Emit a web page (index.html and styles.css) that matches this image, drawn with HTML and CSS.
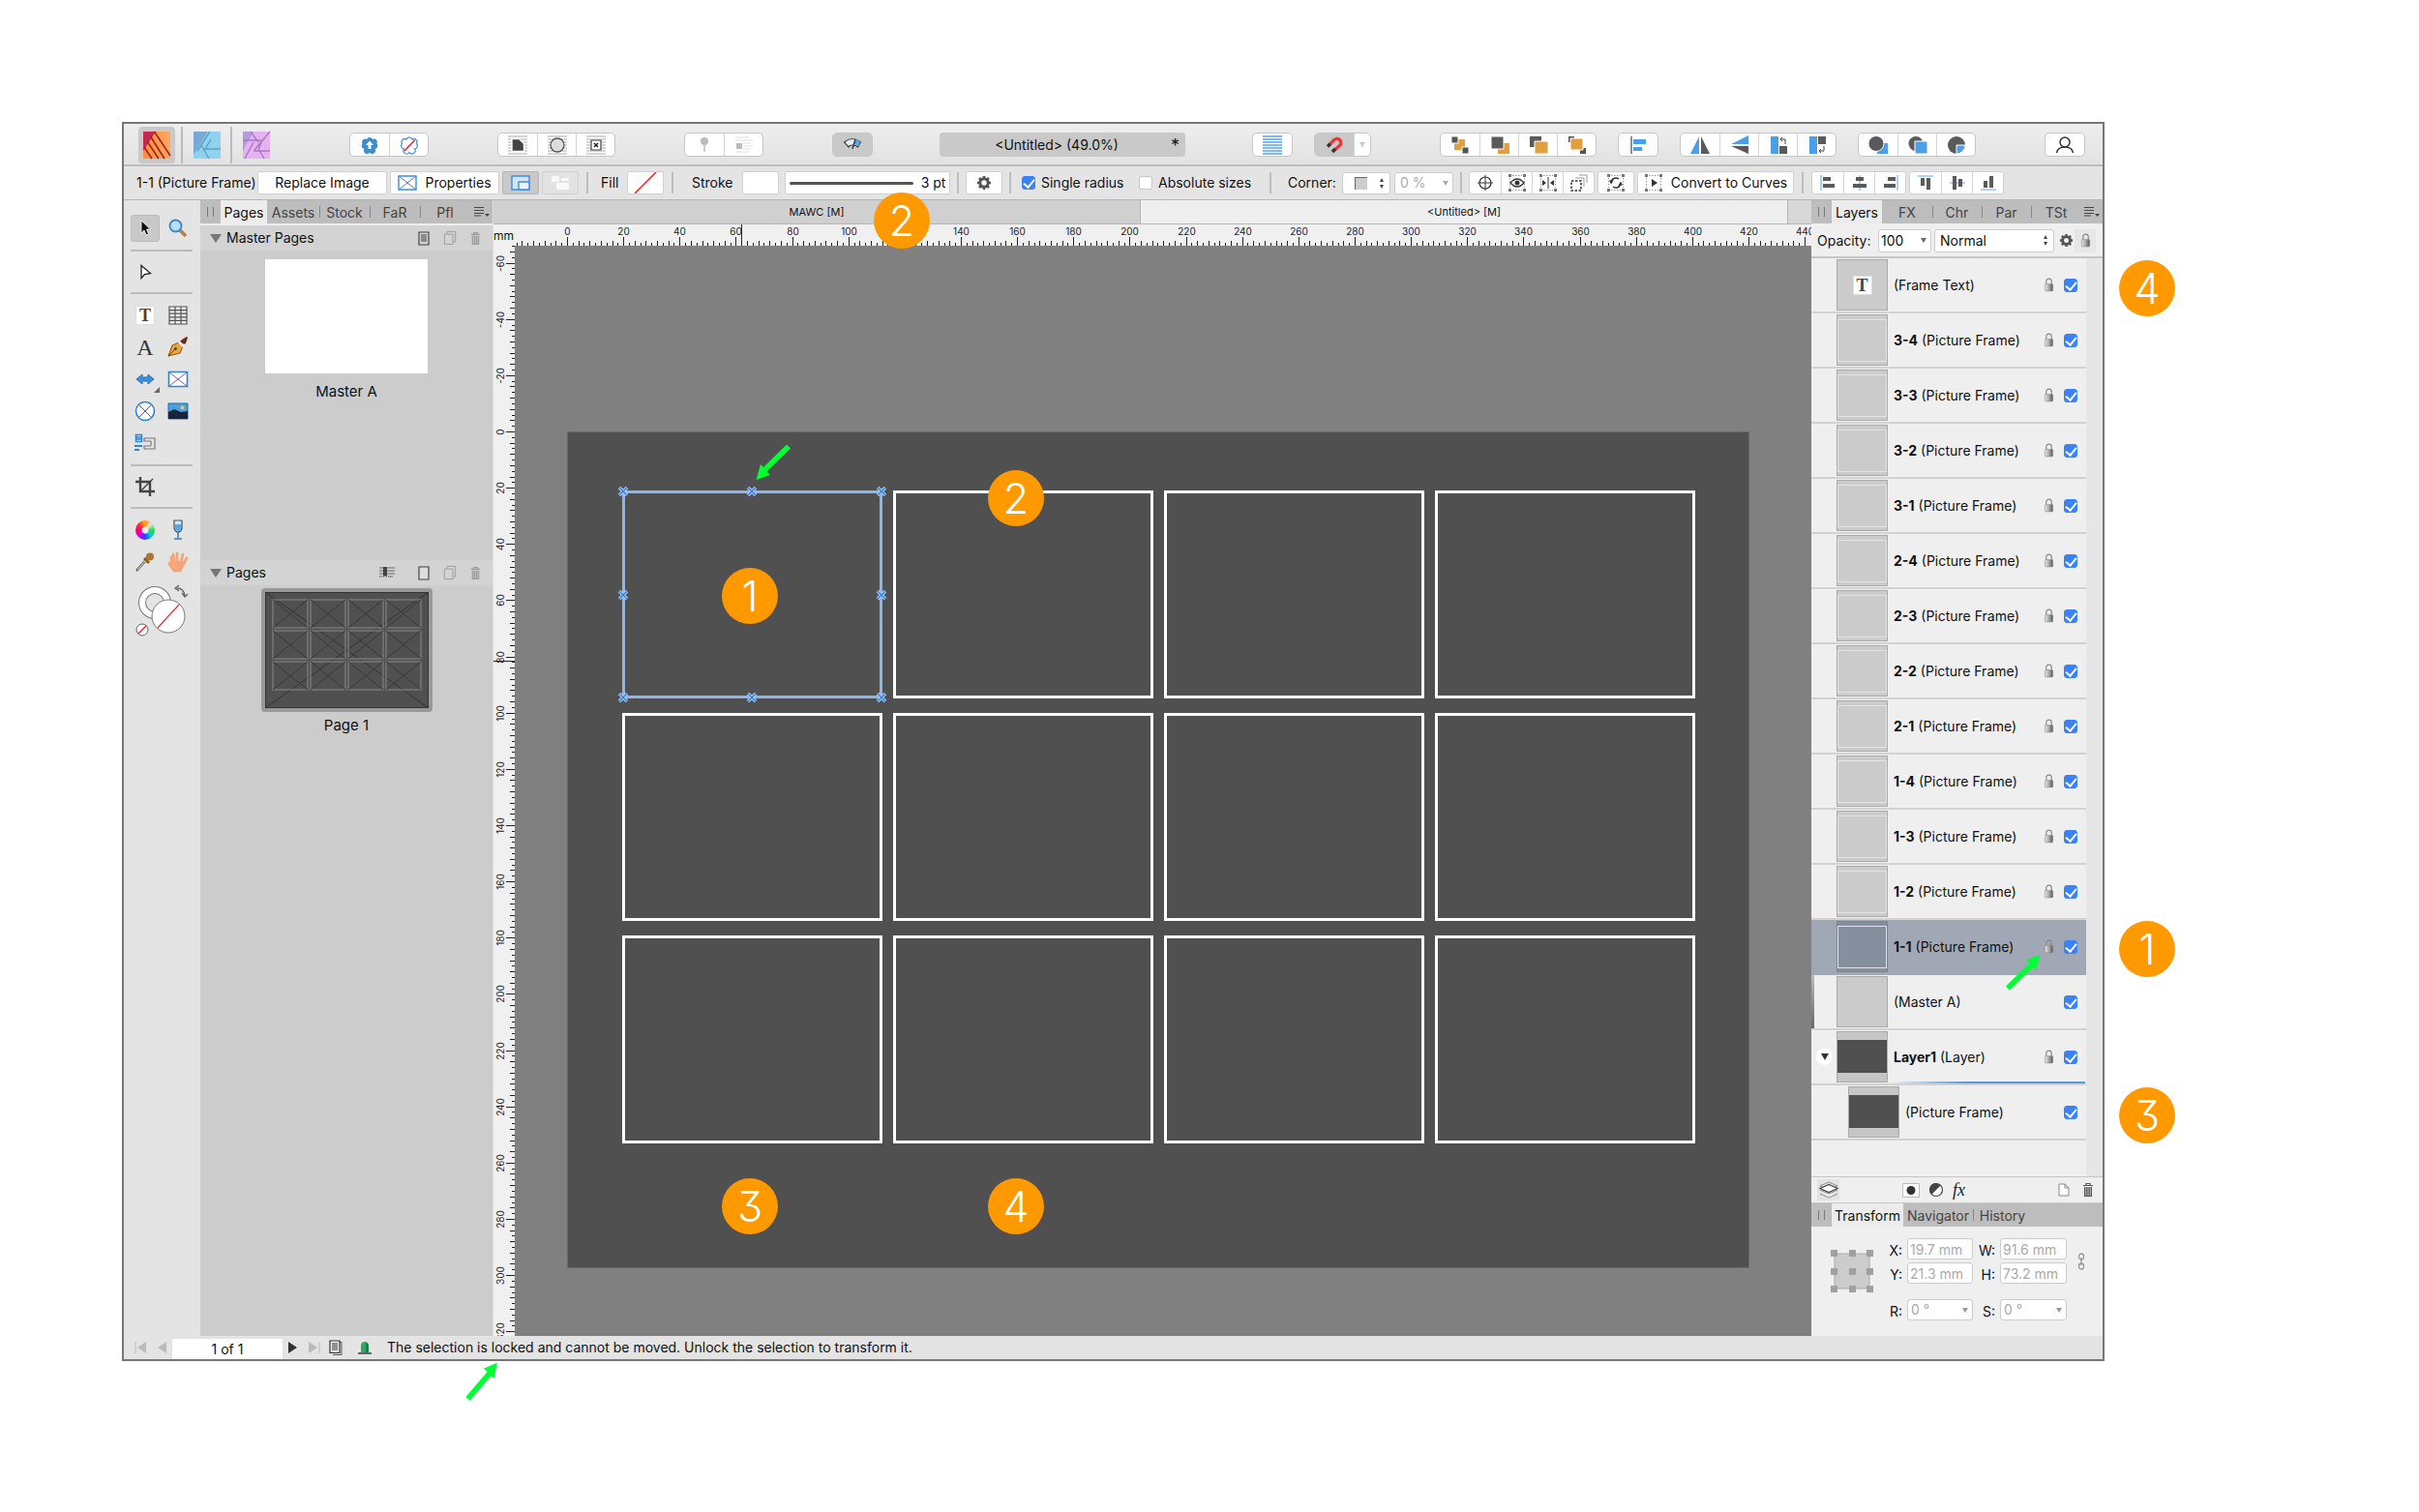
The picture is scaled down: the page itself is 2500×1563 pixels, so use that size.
FILE: index.html
```html
<!DOCTYPE html>
<html lang="en">
<head>
<meta charset="utf-8">
<title>Untitled (49.0%)</title>
<link rel="stylesheet" href="styles.css">
</head>
<body>
<svg class="defs" aria-hidden="true">
  <defs>
    <linearGradient id="metal" x1="0" x2="1"><stop offset="0" stop-color="#e8e8e8"/><stop offset=".5" stop-color="#aaa"/><stop offset="1" stop-color="#555"/></linearGradient>
    <linearGradient id="orange" x1="0" x2="1"><stop offset="0" stop-color="#ff8a3c"/><stop offset="1" stop-color="#ffa860"/></linearGradient>
    <symbol id="lock" viewBox="0 0 12 16"><path d="M3 8V4a3 3 0 0 1 6 0v4" fill="none" stroke="#888" stroke-width="1.3"/><rect x="1.5" y="7" width="9" height="8" rx="1" fill="url(#metal)" stroke="#8a8a8a" stroke-width=".6"/></symbol>
    <symbol id="gear" viewBox="0 0 16 16"><circle cx="8" cy="8" r="4.2" fill="none" stroke="#555" stroke-width="3"/><path d="M8 1v3M8 12v3M1 8h3M12 8h3M3 3l2 2M11 11l2 2M13 3l-2 2M5 11l-2 2" stroke="#555" stroke-width="2.6"/></symbol>
    <symbol id="menu" viewBox="0 0 16 12"><path d="M0 1.5h10M0 4.5h10M0 7.5h10M0 10h7" stroke="#444" stroke-width="1.1"/><path d="M11 8h5l-2.500 3z" fill="#444"/></symbol>
    <symbol id="trash" viewBox="0 0 12 16"><path d="M1 3.500h10M4 3V1.500h4V3" fill="none" stroke="currentColor" stroke-width="1.2"/><path d="M2 5h8v9.500H2z" fill="currentColor" opacity=".45"/><path d="M2.500 5v9.500M4.800 5v9.500M7.200 5v9.500M9.500 5v9.500M2 14.500h8" stroke="currentColor"/></symbol>
    <symbol id="copy" viewBox="0 0 16 18"><path d="M4.500 4V1.500h10v12H12" fill="none" stroke="currentColor"/><path d="M1.500 4.500h10v12h-10z" fill="none" stroke="currentColor"/></symbol>
    <symbol id="handles" viewBox="0 0 20 20"><path d="M2.500 5v10M17.500 5v10M5 2.500h10M5 17.500h10" stroke="#999" stroke-dasharray="1.500 1.500"/><path d="M1 1h3v3H1zM16 1h3v3h-3zM1 16h3v3H1zM16 16h3v3h-3z" fill="#777"/></symbol>
    <symbol id="arrow" viewBox="0 0 36 36"><path d="M35.500 0 21 5 24.500 8.500 0 32.500 4 36.500 28 13 31 16z" fill="#0f3"/></symbol>
    <symbol id="node" viewBox="0 0 12 12"><path d="M2 2l8 8M10 2l-8 8" stroke="#a9cdf9" stroke-width="3.500"/><path d="M2 2l8 8M10 2l-8 8" stroke="#3f83d6" stroke-width="1.500"/></symbol>
  </defs>
</svg>

<main class="page">
<div class="window">

  <header class="titlebar">
    <nav class="apps" aria-label="Personas">
      <button class="app is-active" aria-label="Publisher"><svg width="28" height="28" viewBox="0 0 28 28"><rect width="28" height="28" rx="1" fill="url(#orange)"/><path d="M0 0h13L0 20z" fill="#c22a50"/><path d="M11.500 0 28 25M7.500 5 22 28M4 10 16 28M1 16 9 28" stroke="#9c2620" stroke-width="1.600"/></svg></button>
      <button class="app" aria-label="Designer"><svg width="28" height="28" viewBox="0 0 28 28"><rect width="28" height="28" rx="1" fill="#8fd2ee"/><path d="M0 0h15L0 24z" fill="#79a9d2"/><path d="M17 0 4 20M8 14 16 28M11 18h17M18 8 12 18" stroke="#5f9fc4" stroke-width="1.400" fill="none"/></svg></button>
      <button class="app" aria-label="Photo"><svg width="28" height="28" viewBox="0 0 28 28"><rect width="28" height="28" rx="1" fill="#e6b3f0"/><path d="M0 0h11L0 20z" fill="#b79be0"/><path d="M8 0l8 11M0 9h19M28 0 12 19M11 11 2 28M11 20h17M17 19l5 9M19 11l-3 8" stroke="#a579c4" stroke-width="1.400" fill="none"/></svg></button>
    </nav>

    <div class="seg">
      <button aria-label="Assets"><svg width="20" height="20" viewBox="0 0 20 20"><path d="M7 4a3.200 3.200 0 0 1 6 0 3.300 3.300 0 0 1 4.500 4.500 3.300 3.300 0 0 1-2 5.500 3.200 3.200 0 0 1-5.500 3.500 3.200 3.200 0 0 1-5.500-3.500 3.300 3.300 0 0 1-2-5.500A3.300 3.300 0 0 1 7 4z" fill="#3d8ecb"/><path d="M10 5.500 14 10h-2.500v4h-3v-4H6z" fill="#fff"/></svg></button>
      <button aria-label="No style"><svg width="20" height="20" viewBox="0 0 20 20"><path d="M7 4a3.200 3.200 0 0 1 6 0 3.300 3.300 0 0 1 4.500 4.500 3.300 3.300 0 0 1-2 5.500 3.200 3.200 0 0 1-5.500 3.500 3.200 3.200 0 0 1-5.500-3.500 3.300 3.300 0 0 1-2-5.500A3.300 3.300 0 0 1 7 4z" fill="none" stroke="#4a94d6" stroke-width="1.300"/><path d="M5 16 15.500 5" stroke="#e22" stroke-width="1.600"/></svg></button>
    </div>

    <div class="seg">
      <button aria-label="Wrap jump"><svg width="20" height="20" viewBox="0 0 20 20"><path d="M0 1h20M0 4h20M0 7h20M0 10h20M0 13h20M0 16h20M0 19h20" stroke="#aaa"/><path d="M4 3.500h7.500l5 5v8H4z" fill="#444" stroke="#fff" stroke-width="1.400"/></svg></button>
      <button aria-label="Wrap tight"><svg width="20" height="20" viewBox="0 0 20 20"><path d="M0 1h20M0 4h20M0 7h20M0 10h20M0 13h20M0 16h20M0 19h20" stroke="#aaa"/><circle cx="10" cy="10" r="7" fill="#ddd" stroke="#555" stroke-width="1.300"/></svg></button>
      <button aria-label="Wrap none"><svg width="20" height="20" viewBox="0 0 20 20"><path d="M0 1h20M0 4h20M0 7h20M0 10h20M0 13h20M0 16h20M0 19h20" stroke="#aaa"/><path d="M5 5h10v10H5z" fill="#fff" stroke="#444" stroke-width="1.200"/><path d="M8 8l4 4M12 8l-4 4" stroke="#222" stroke-width="1.500"/></svg></button>
    </div>

    <div class="seg">
      <button aria-label="Pin"><svg width="20" height="20" viewBox="0 0 20 20"><circle cx="10" cy="6" r="4" fill="#bbb"/><path d="M10 9v8" stroke="#bbb" stroke-width="1.500"/></svg></button>
      <button aria-label="Inline"><svg width="20" height="20" viewBox="0 0 20 20"><path d="M1 2h13M1 5h18M9 8h8M9 11h10M9 14h8M1 17h14" stroke="#ddd"/><path d="M2 8h6v6H2z" fill="#bbb"/></svg></button>
    </div>

    <div class="seg">
      <button class="is-pressed" aria-label="Preflight"><svg width="20" height="20" viewBox="0 0 20 20"><path d="M1.500 7Q10 0 18.500 7l-3 5q-2-2-5.500-2t-4 2z" fill="#e6eef5" stroke="#444" stroke-width="1.200"/><path d="M11 9l5 2 2-4-5-4z" fill="#5aa5e0"/><path d="M10 14 13 4" stroke="#333" stroke-width="1.300"/></svg></button>
    </div>

    <div class="doc-title"><span>&lt;Untitled&gt; (49.0%)</span><span class="dirty">*</span></div>

    <div class="cluster">
      <div class="seg">
        <button aria-label="Baseline grid"><svg width="22" height="20" viewBox="0 0 22 20"><path d="M1 1h20M1 4h20M1 7h20M1 10h20M1 13h20M1 16h20M1 19h20" stroke="#58a3e6" stroke-width="1.400"/></svg></button>
      </div>
      <div class="seg">
        <button class="is-pressed" aria-label="Snapping"><svg width="18" height="20" viewBox="0 0 18 20"><path d="M5 8.500 9 4.500a4 4 0 0 1 5.500 6L10 14.500" fill="none" stroke="#e03a3a" stroke-width="3.500"/><path d="M2 11.500l3-3M7 17l3-3" stroke="#333" stroke-width="3.500"/></svg></button>
        <button class="slim" aria-label="Snapping options"><svg width="8" height="8" viewBox="0 0 8 8"><path d="M1 1h6L4 7z" fill="#ccc"/></svg></button>
      </div>
    </div>

    <div class="cluster">
      <div class="seg">
        <button aria-label="Move to back"><svg width="20" height="20" viewBox="0 0 20 20"><path d="M4 4h11v11H4z" fill="#e0a040"/><path d="M1 1h7v7H1zM12 12h7v7h-7z" fill="#555" stroke="#fff"/></svg></button>
        <button aria-label="Back one"><svg width="20" height="20" viewBox="0 0 20 20"><path d="M8 8h12v11H8z" fill="#e0a040"/><path d="M1 1h13v13H1z" fill="#5a5a5a" stroke="#fff"/></svg></button>
        <button aria-label="Forward one"><svg width="20" height="20" viewBox="0 0 20 20"><path d="M1 1h12v11H1z" fill="#5a5a5a"/><path d="M6 6h14v13H6z" fill="#e0a040" stroke="#fff"/></svg></button>
        <button aria-label="Move to front"><svg width="20" height="20" viewBox="0 0 20 20"><path d="M1 1h6v6H1zM13 13h6v6h-6z" fill="#555"/><path d="M3 3h13v12H3z" fill="#e0a040" stroke="#fff"/></svg></button>
      </div>
      <div class="seg">
        <button aria-label="Alignment"><svg width="18" height="20" viewBox="0 0 18 20"><path d="M2 1v18" stroke="#555" stroke-width="1.300"/><path d="M4 4h13v5H4zM4 12h9v4H4z" fill="#4a9fe6"/></svg></button>
      </div>
      <div class="seg">
        <button aria-label="Flip horizontal"><svg width="22" height="20" viewBox="0 0 22 20"><path d="M10 1v18H1z" fill="#4a9fe6"/><path d="M12 1v18h9z" fill="#5a5a5a"/></svg></button>
        <button aria-label="Flip vertical"><svg width="20" height="22" viewBox="0 0 20 22"><path d="M19 1v9H1z" fill="#4a9fe6"/><path d="M19 12v8L1 12z" fill="#5a5a5a"/></svg></button>
        <button aria-label="Rotate left"><svg width="20" height="20" viewBox="0 0 20 20"><path d="M2 1h8v18H2z" fill="#4a9fe6"/><path d="M11 11h8v8h-8z" fill="#5a5a5a"/><path d="M12 4h5v5M14 2l-2 2 2 2" fill="none" stroke="#444"/></svg></button>
        <button aria-label="Rotate right"><svg width="20" height="20" viewBox="0 0 20 20"><path d="M2 1h8v18H2z" fill="#4a9fe6"/><path d="M11 1h8v8h-8z" fill="#5a5a5a"/><path d="M17 11v5h-5M14 14l-2 2 2 2" fill="none" stroke="#444"/></svg></button>
      </div>
      <div class="seg">
        <button aria-label="Add"><svg width="20" height="20" viewBox="0 0 20 20"><path d="M9 8h11v11H9z" fill="#4a9fe6"/><circle cx="8" cy="8.500" r="8" fill="#5a5a5a" stroke="#fff"/></svg></button>
        <button aria-label="Subtract"><svg width="20" height="20" viewBox="0 0 20 20"><circle cx="8" cy="8.500" r="7.500" fill="#5a5a5a"/><path d="M7 6h13v13H7z" fill="#4a9fe6" stroke="#fff"/></svg></button>
        <button aria-label="Intersect"><svg width="20" height="20" viewBox="0 0 20 20"><circle cx="10" cy="10" r="9" fill="#5a5a5a"/><path d="M10 10h9a9 9 0 0 1-9 9z" fill="#4a9fe6" stroke="#fff"/></svg></button>
      </div>
    </div>

    <div class="seg account">
      <button aria-label="Account"><svg width="20" height="20" viewBox="0 0 20 20"><circle cx="10" cy="7" r="5" fill="none" stroke="#333" stroke-width="1.500"/><path d="M1.500 18q1-6 8.500-6t8.500 6" fill="none" stroke="#333" stroke-width="1.500"/></svg></button>
    </div>
  </header>

  <div class="context" role="toolbar" aria-label="Context toolbar">
    <span class="ctx-name">1-1 (Picture Frame)</span>
    <button class="ctx-btn replace">Replace Image</button>
    <button class="ctx-btn props"><svg width="20" height="16" viewBox="0 0 20 16"><path d="M1 1h18v14H1z" fill="#fff" stroke="#3c8edb" stroke-width="1.400"/><path d="M1 1l18 14M19 1 1 15" stroke="#5b76c8"/></svg>Properties</button>
    <button class="ctx-btn is-pressed" aria-label="Frame"><svg width="20" height="16" viewBox="0 0 20 16"><path d="M1 1h18v14H1z" fill="#d3e5f5" stroke="#3c8edb" stroke-width="1.400"/><path d="M8 7h11v8H8z" fill="#e8f3fc" stroke="#3c8edb" stroke-width="1.400"/></svg></button>
    <button class="ctx-btn is-off" aria-label="Picture" disabled><svg width="20" height="16" viewBox="0 0 20 16"><path d="M1 1h8v6H1zM11 3h8v3h-8zM6 8h13v7H6z" fill="#f8f8f8"/></svg></button>
    <i class="bar"></i>
    <span class="ctx-label">Fill</span>
    <button class="ctx-btn swatch" aria-label="Fill colour"><svg width="36" height="22" viewBox="0 0 36 22"><path d="M7 22 29 0" stroke="#e22" stroke-width="1.500"/></svg></button>
    <i class="bar"></i>
    <span class="ctx-label wide">Stroke</span>
    <button class="ctx-btn swatch" aria-label="Stroke colour"></button>
    <button class="ctx-btn stroke-w"><i class="stroke-line"></i>3 pt</button>
    <i class="bar tight"></i>
    <button class="ctx-btn swatch" aria-label="Options"><svg width="16" height="16"><use href="#gear"/></svg></button>
    <i class="bar tight"></i>
    <label class="check single"><input type="checkbox" checked>Single radius</label>
    <label class="check absolute-sizes"><input type="checkbox">Absolute sizes</label>
    <i class="bar"></i>
    <label class="ctx-label corner" for="corner">Corner:</label>
    <span class="pick updown corner-pick"><select id="corner"><option></option></select><i class="corner-sq"></i></span>
    <span class="pick down percent"><select aria-label="Corner radius"><option>0 %</option></select></span>
    <i class="bar tight"></i>
    <div class="ctx-seg">
      <button aria-label="Target"><svg width="18" height="18" viewBox="0 0 18 18"><circle cx="9" cy="9" r="6" fill="none" stroke="#333" stroke-width="1.200"/><path d="M9 1v16M1 9h16" stroke="#333"/></svg></button>
      <button aria-label="Show"><svg width="20" height="20" viewBox="0 0 20 20"><use href="#handles"/><path d="M3 10q7-8 14 0-7 8-14 0z" fill="#fff" stroke="#333" stroke-width="1.400"/><circle cx="10" cy="10" r="2.500" fill="#333"/></svg></button>
      <button aria-label="Centre"><svg width="20" height="20" viewBox="0 0 20 20"><use href="#handles"/><path d="M10 4v12" stroke="#333"/><path d="M4 7l4 3-4 3zM16 7l-4 3 4 3z" fill="#333"/></svg></button>
      <button aria-label="Separately"><svg width="20" height="20" viewBox="0 0 20 20"><path d="M2 8h10v10H2z" fill="none" stroke="#333" stroke-width="1.500" stroke-dasharray="2.500 1.500"/><path d="M6 5h9v9M10 2h8v8" fill="none" stroke="#999"/></svg></button>
    </div>
    <div class="ctx-seg">
      <button class="lone" aria-label="Cycle"><svg width="20" height="20" viewBox="0 0 20 20"><use href="#handles"/><path d="M5 10a5 5 0 0 1 8-4M15 10a5 5 0 0 1-8 4" fill="none" stroke="#333" stroke-width="1.500"/><path d="M3 7.500h4.500L5 11.500zM17 12.500h-4.500L15 8.500z" fill="#333"/></svg></button>
    </div>
    <button class="ctx-btn convert"><svg width="20" height="20" viewBox="0 0 20 20"><use href="#handles"/><path d="M8 6l6 4-6 4z" fill="#333"/></svg>Convert to Curves</button>
    <i class="bar even"></i>
    <div class="ctx-seg">
      <button aria-label="Align left"><svg width="16" height="16" viewBox="0 0 16 16"><path d="M1 0v16" stroke="#5aa5e6"/><path d="M3 2h8v4H3zM3 9h12v4H3z" fill="#5a5a5a"/></svg></button>
      <button aria-label="Align centre"><svg width="16" height="16" viewBox="0 0 16 16"><path d="M8 0v16" stroke="#5aa5e6"/><path d="M4 2h8v4H4zM1 9h14v4H1z" fill="#5a5a5a"/></svg></button>
      <button aria-label="Align right"><svg width="16" height="16" viewBox="0 0 16 16"><path d="M15 0v16" stroke="#5aa5e6"/><path d="M5 2h8v4H5zM1 9h12v4H1z" fill="#5a5a5a"/></svg></button>
    </div>
    <div class="ctx-seg">
      <button aria-label="Align top"><svg width="16" height="16" viewBox="0 0 16 16"><path d="M0 1h16" stroke="#5aa5e6"/><path d="M3 3h4v8H3zM9 3h4v12H9z" fill="#5a5a5a"/></svg></button>
      <button aria-label="Align middle"><svg width="16" height="16" viewBox="0 0 16 16"><path d="M0 8h16" stroke="#5aa5e6"/><path d="M3 1h4v14H3zM9 4h4v8H9z" fill="#5a5a5a"/></svg></button>
      <button aria-label="Align bottom"><svg width="16" height="16" viewBox="0 0 16 16"><path d="M0 15h16" stroke="#5aa5e6"/><path d="M3 6h4v7H3zM9 1h4v12H9z" fill="#5a5a5a"/></svg></button>
    </div>
  </div>

  <div class="workspace">
    <aside class="tools" aria-label="Tools">
      <div class="tool-grid">
        <button class="is-pressed" aria-label="Move"><svg width="14" height="18" viewBox="0 0 14 18"><path d="M3 1v13l3-3 2 5 2.500-1-2-5h4z" fill="#111" stroke="#fff" stroke-width=".8"/></svg></button>
        <button aria-label="Zoom"><svg width="22" height="22" viewBox="0 0 22 22"><path d="M13 13l6 6" stroke="#b5824a" stroke-width="3.500"/><circle cx="8.500" cy="8.500" r="6" fill="#b8e0fa" stroke="#3f87c6" stroke-width="1.800"/></svg></button>
      </div>
      <div class="tool-grid">
        <button aria-label="Node"><svg width="14" height="18" viewBox="0 0 14 18"><path d="M3 2.500v13l3.500-4 6-1z" fill="#fff" stroke="#222" stroke-width="1.300"/></svg></button>
      </div>
      <div class="tool-grid">
        <button aria-label="Frame text"><span class="tile-t">T</span></button>
        <button aria-label="Table"><svg width="20" height="20" viewBox="0 0 20 20"><path d="M1 1h18v18H1zM1 4.600h18M1 8.200h18M1 11.800h18M1 15.400h18M7 1v18M13 1v18" fill="#eee" stroke="#555" stroke-width="1.200"/></svg></button>
        <button aria-label="Art text"><span class="tile-a">A</span></button>
        <button aria-label="Pen"><svg width="24" height="24" viewBox="0 0 24 24"><path d="M2 21 6 10l7-3 4 4-3 7z" fill="#eba53c" stroke="#8a5512"/><path d="M2 21l7-7" stroke="#543"/><circle cx="9.500" cy="13.500" r="1.300" fill="#333"/><path d="M13 6l5 5" stroke="#f4f4f4" stroke-width="3"/><path d="M16 4l5-3 1 1-2 6-2 1-4-3z" fill="#6b2f22"/></svg></button>
        <button aria-label="Shape"><svg width="20" height="14" viewBox="0 0 20 14"><path d="M1 7l6-5v3h6V2l6 5-6 5V9H7v3z" fill="#3c8fd8" stroke="#2a70b0"/></svg><i class="more"></i></button>
        <button aria-label="Rectangle frame"><svg width="22" height="18" viewBox="0 0 22 18"><path d="M1.500 1.500h19v15h-19z" fill="#fff" stroke="#2f86cf" stroke-width="1.600"/><path d="M2 2l18 14M20 2 2 16" stroke="#6668b8"/></svg></button>
        <button aria-label="Ellipse frame"><svg width="22" height="22" viewBox="0 0 22 22"><circle cx="11" cy="11" r="9.500" fill="#fff" stroke="#2f86cf" stroke-width="1.600"/><path d="M4.500 4.500l13 13M17.500 4.500l-13 13" stroke="#5558b0"/></svg></button>
        <button aria-label="Place image"><svg width="22" height="18" viewBox="0 0 22 18"><path d="M1 1h20v16H1z" fill="#4aa0e0" stroke="#246aa8"/><circle cx="15.500" cy="5.500" r="2" fill="#f5c83c"/><path d="M1 10l6-3 7 3 7-1v8H1z" fill="#16233a"/></svg></button>
        <button aria-label="Data merge"><svg width="22" height="20" viewBox="0 0 22 20"><path d="M1.500 1.500h6v7h-6zM2 4h5M2 6h5" fill="none" stroke="#2f86cf" stroke-width="1.500"/><path d="M0 13h8M0 17h5" stroke="#2f86cf" stroke-width="2"/><path d="M10 5h11v11H10M10 5v3h7M10 16v-3h7M17 8v5" fill="none" stroke="#777" stroke-width="1.200"/></svg></button>
      </div>
      <div class="tool-grid">
        <button aria-label="Crop"><svg width="20" height="20" viewBox="0 0 20 20"><path d="M5 0v15h15M0 5h15v15" fill="none" stroke="#444" stroke-width="2.400"/><path d="M5 15 18 2" stroke="#444" stroke-width="1.400"/></svg></button>
      </div>
      <div class="tool-grid">
        <button aria-label="Colour"><span class="wheel"></span></button>
        <button aria-label="Transparency"><svg width="16" height="22" viewBox="0 0 16 22"><path d="M4 1h8v8q-1 4-4 4T4 9z" fill="#cfe8fa" stroke="#456" stroke-width="1.200"/><path d="M5 5h6v5q-3 4-6 0z" fill="#5aa9e0"/><path d="M8 13v6M4 20h8" stroke="#3a79ac" stroke-width="1.500"/></svg></button>
        <button aria-label="Colour picker"><svg width="22" height="22" viewBox="0 0 22 22"><path d="M2 20l9-10" stroke="#555" stroke-width="2.500"/><path d="M3 19l8-9" stroke="#eee"/><path d="M10 7l5 5M12 8l5-5" stroke="#8a6125" stroke-width="3"/><circle cx="16" cy="5.500" r="4" fill="#a8792f"/></svg></button>
        <button aria-label="View"><svg width="22" height="22" viewBox="0 0 22 22"><path d="M7 20 2 13q0-2 3 0L4 6M7 11 6 3M10 11V2M14 11l2-8M17 13l3-6" stroke="#f2a679" stroke-width="2.800" fill="none" stroke-linecap="round"/><path d="M5 10h12v5l-3 6H8z" fill="#f2a679"/></svg></button>
      </div>
      <svg class="fills" width="64" height="56" viewBox="0 0 64 56"><circle cx="25" cy="20" r="13" fill="none" stroke="#777" stroke-width="8"/><circle cx="25" cy="20" r="13" fill="none" stroke="#fff" stroke-width="6"/><circle cx="39" cy="34" r="17" fill="#fff" stroke="#777"/><path d="M28 46 50 22" stroke="#d33" stroke-width="1.200"/><circle cx="12" cy="48" r="6" fill="#fff" stroke="#666"/><path d="M8 52l8-8" stroke="#e22" stroke-width="1.500"/><path d="M48 5q7 0 8 8M50 2l-4 3 4 3M53 10l3 4 3-3" fill="none" stroke="#666" stroke-width="1.400"/></svg>
    </aside>

    <aside class="pages">
      <div class="tabs pages-tabs">
        <i class="grip"></i><button class="tab is-active">Pages</button><button class="tab">Assets</button><button class="tab split">Stock</button><button class="tab split">FaR</button><button class="tab split">Pfl</button>
        <svg class="tab-menu" width="16" height="12"><use href="#menu"/></svg>
      </div>
      <section class="masters">
        <div class="sec-head"><i class="tri"></i><h2>Master Pages</h2>
          <svg width="12" height="15" viewBox="0 0 12 15"><path d="M1 1h10v13H1zM3 4h6M3 6h6M3 8h6M3 10h6" fill="none" stroke="#444" stroke-width="1.200"/></svg>
          <svg class="dim" width="14" height="16"><use href="#copy"/></svg>
          <svg class="dim" width="11" height="15"><use href="#trash"/></svg></div>
        <div class="master-thumb"></div>
        <p class="thumb-name">Master A</p>
      </section>
      <section>
        <div class="sec-head"><i class="tri"></i><h2>Pages</h2>
          <svg class="book" width="16" height="14" viewBox="0 0 16 14"><path d="M0 2h16M0 5h16M0 8h16M0 11h3M9 11h5" stroke="#666"/><path d="M4 1h4v11l-2-2-2 2z" fill="#444"/></svg>
          <svg width="12" height="15" viewBox="0 0 12 15"><path d="M1 1h10v13H1z" fill="#ddd" stroke="#444" stroke-width="1.200"/></svg>
          <svg class="dim" width="14" height="16"><use href="#copy"/></svg>
          <svg class="dim" width="11" height="15"><use href="#trash"/></svg></div>
        <div class="page-thumb">
          <svg viewBox="0 0 169 120" id="page-preview"></svg>
        </div>
        <p class="thumb-name">Page 1</p>
      </section>
    </aside>

    <section class="document">
      <div class="doc-tabs"><button>MAWC [M]</button><button class="is-active">&lt;Untitled&gt; [M]</button><i></i></div>
      <div class="stage">
        <span class="unit">mm</span>
        <svg class="ruler-x" id="ruler-x"></svg>
        <svg class="ruler-y" id="ruler-y"></svg>
        <div class="canvas">
          <div class="artboard">
            <div class="frames">
              <div class="frame is-selected">
                <svg class="n n1"><use href="#node"/></svg><svg class="n n2"><use href="#node"/></svg><svg class="n n3"><use href="#node"/></svg><svg class="n n4"><use href="#node"/></svg><svg class="n n5"><use href="#node"/></svg><svg class="n n6"><use href="#node"/></svg><svg class="n n7"><use href="#node"/></svg><svg class="n n8"><use href="#node"/></svg>
              </div>
              <div class="frame"></div><div class="frame"></div><div class="frame"></div>
              <div class="frame"></div><div class="frame"></div><div class="frame"></div><div class="frame"></div>
              <div class="frame"></div><div class="frame"></div><div class="frame"></div><div class="frame"></div>
            </div>
            <svg class="pointer p-frame" width="36" height="36"><use href="#arrow"/></svg>
            <b class="badge b-one">1</b><b class="badge b-two">2</b><b class="badge b-three">3</b><b class="badge b-four">4</b>
          </div>
        </div>
        <b class="badge b-tab">2</b>
      </div>
    </section>

    <aside class="side">
      <div class="tabs side-tabs">
        <i class="grip"></i><button class="tab is-active">Layers</button><button class="tab">FX</button><button class="tab split">Chr</button><button class="tab split">Par</button><button class="tab split">TSt</button>
        <svg class="tab-menu" width="16" height="12"><use href="#menu"/></svg>
      </div>
      <div class="blend">
        <label for="opacity">Opacity:</label>
        <span class="pick down opacity"><select id="opacity"><option>100</option></select></span>
        <span class="pick updown mode"><select aria-label="Blend mode"><option>Normal</option></select></span>
        <svg width="15" height="15"><use href="#gear"/></svg>
        <button class="blend-lock" aria-label="Lock"><svg width="11" height="15"><use href="#lock"/></svg></button>
      </div>
      <ul class="layers">
        <li><i class="th"><span class="tile-t">T</span></i><span class="nm">(Frame Text)</span><svg class="lk"><use href="#lock"/></svg><input type="checkbox" checked aria-label="Frame Text visible"></li>
        <li><i class="th fr"></i><span class="nm"><b>3-4</b> (Picture Frame)</span><svg class="lk"><use href="#lock"/></svg><input type="checkbox" checked aria-label="3-4 visible"></li>
        <li><i class="th fr"></i><span class="nm"><b>3-3</b> (Picture Frame)</span><svg class="lk"><use href="#lock"/></svg><input type="checkbox" checked aria-label="3-3 visible"></li>
        <li><i class="th fr"></i><span class="nm"><b>3-2</b> (Picture Frame)</span><svg class="lk"><use href="#lock"/></svg><input type="checkbox" checked aria-label="3-2 visible"></li>
        <li><i class="th fr"></i><span class="nm"><b>3-1</b> (Picture Frame)</span><svg class="lk"><use href="#lock"/></svg><input type="checkbox" checked aria-label="3-1 visible"></li>
        <li><i class="th fr"></i><span class="nm"><b>2-4</b> (Picture Frame)</span><svg class="lk"><use href="#lock"/></svg><input type="checkbox" checked aria-label="2-4 visible"></li>
        <li><i class="th fr"></i><span class="nm"><b>2-3</b> (Picture Frame)</span><svg class="lk"><use href="#lock"/></svg><input type="checkbox" checked aria-label="2-3 visible"></li>
        <li><i class="th fr"></i><span class="nm"><b>2-2</b> (Picture Frame)</span><svg class="lk"><use href="#lock"/></svg><input type="checkbox" checked aria-label="2-2 visible"></li>
        <li><i class="th fr"></i><span class="nm"><b>2-1</b> (Picture Frame)</span><svg class="lk"><use href="#lock"/></svg><input type="checkbox" checked aria-label="2-1 visible"></li>
        <li><i class="th fr"></i><span class="nm"><b>1-4</b> (Picture Frame)</span><svg class="lk"><use href="#lock"/></svg><input type="checkbox" checked aria-label="1-4 visible"></li>
        <li><i class="th fr"></i><span class="nm"><b>1-3</b> (Picture Frame)</span><svg class="lk"><use href="#lock"/></svg><input type="checkbox" checked aria-label="1-3 visible"></li>
        <li><i class="th fr"></i><span class="nm"><b>1-2</b> (Picture Frame)</span><svg class="lk"><use href="#lock"/></svg><input type="checkbox" checked aria-label="1-2 visible"></li>
        <li class="is-selected"><i class="th fr"></i><span class="nm"><b>1-1</b> (Picture Frame)</span><svg class="lk"><use href="#lock"/></svg><input type="checkbox" checked aria-label="1-1 visible"><svg class="pointer p-layer" width="36" height="36"><use href="#arrow"/></svg></li>
        <li class="master"><i class="th"></i><span class="nm">(Master A)</span><input type="checkbox" checked aria-label="Master A visible"></li>
        <li class="group"><i class="open"></i><i class="th dark"></i><span class="nm"><b>Layer1</b> (Layer)</span><svg class="lk"><use href="#lock"/></svg><input type="checkbox" checked aria-label="Layer1 visible"></li>
        <li class="child"><i class="th dark"></i><span class="nm">(Picture Frame)</span><input type="checkbox" checked aria-label="Picture Frame visible"></li>
      </ul>
      <div class="layer-actions">
        <button class="is-soft" aria-label="Edit all layers"><svg width="20" height="18" viewBox="0 0 20 18"><path d="M1 5l9-4 9 4-9 4zM1 9l9 4 9-4M1 13l9 4 9-4" fill="#eee" stroke="#888"/><path d="M1 7.500l9-4 9 4-9 4z" fill="#fff" stroke="#444" stroke-width="1.200"/></svg></button>
        <button class="first" aria-label="Mask"><svg width="18" height="15" viewBox="0 0 18 15"><path d="M.5.500h17v14H.5z" fill="#fff" stroke="#bbb"/><circle cx="9" cy="7.500" r="4.500" fill="#333"/></svg></button>
        <button aria-label="Adjustments"><svg width="16" height="16" viewBox="0 0 16 16"><circle cx="8" cy="8" r="6.500" fill="#fff" stroke="#444" stroke-width="1.200"/><path d="M12.500 3.500a6.400 6.400 0 1 0-9 9z" fill="#444"/></svg></button>
        <button class="fx">fx</button>
        <button class="last" aria-label="Add layer"><svg width="12" height="14" viewBox="0 0 12 14"><path d="M1 1h6l4 4v8H1zM7 1v4h4" fill="#fff" stroke="#888"/></svg></button>
        <button class="bin" aria-label="Delete"><svg width="12" height="16"><use href="#trash"/></svg></button>
      </div>
      <div class="tabs transform-tabs"><i class="grip"></i><button class="tab is-active">Transform</button><button class="tab">Navigator</button><button class="tab split">History</button></div>
      <form class="transform">
        <svg class="anchor" width="44" height="44" viewBox="0 0 44 44"><path d="M4 4h36v36H4z" fill="#ccc" stroke="#aaa"/><path d="M0 0h7v7H0zM19 0h7v7h-7zM37 0h7v7h-7zM0 19h7v7H0zM19 19h7v7h-7zM37 19h7v7h-7zM0 37h7v7H0zM19 37h7v7h-7zM37 37h7v7h-7z" fill="#a0a0a0"/></svg>
        <div class="fields">
          <label for="tx">X:</label><input id="tx" value="19.7 mm"><label for="tw">W:</label><input id="tw" value="91.6 mm">
          <label for="ty">Y:</label><input id="ty" value="21.3 mm"><label for="th">H:</label><input id="th" value="73.2 mm">
          <label class="gap" for="tr">R:</label><span class="gap pick down"><select id="tr"><option>0 °</option></select></span><label class="gap" for="ts">S:</label><span class="gap pick down"><select id="ts"><option>0 °</option></select></span>
        </div>
        <svg class="chain" width="8" height="18" viewBox="0 0 8 18"><rect x="1.500" y="1" width="5" height="6" rx="2.500" fill="none" stroke="#999" stroke-width="1.300"/><rect x="1.500" y="11" width="5" height="6" rx="2.500" fill="none" stroke="#999" stroke-width="1.300"/><path d="M4 5v8" stroke="#999" stroke-width="1.300"/></svg>
      </form>
      <b class="badge o-four">4</b><b class="badge o-one">1</b><b class="badge o-three">3</b>
    </aside>
  </div>

  <footer class="status">
    <button aria-label="First page"><svg width="14" height="14" viewBox="0 0 14 14"><path d="M2 1v12" stroke="#bbb"/><path d="M13 1v12L4 7z" fill="#bbb"/></svg></button>
    <button aria-label="Previous page"><svg width="14" height="14" viewBox="0 0 14 14"><path d="M12 1v12L3 7z" fill="#bbb"/></svg></button>
    <input class="page-no" value="1 of 1" aria-label="Page">
    <button aria-label="Next page"><svg width="14" height="14" viewBox="0 0 14 14"><path d="M2 1v12l9-6z" fill="#333"/></svg></button>
    <button aria-label="Last page"><svg width="14" height="14" viewBox="0 0 14 14"><path d="M1 1v12l9-6zM11.500 1h1v12h-1z" fill="#bbb"/></svg></button>
    <button aria-label="Spreads"><svg width="14" height="16" viewBox="0 0 14 16"><path d="M3 2.500h10v13H4" fill="none" stroke="#555"/><path d="M1 1h10v12.500H1zM3 4h6M3 6h6M3 8h6M3 10h6" fill="#eee" stroke="#333" stroke-width="1.200"/></svg></button>
    <button class="bell" aria-label="Preflight status"><svg width="16" height="14" viewBox="0 0 16 14"><path d="M4 12V5q0-4 4-4t4 4v7z" fill="#2fa866"/><path d="M9 2q3 1 3 4v6H9z" fill="#1d7a49"/><path d="M1 13h14" stroke="#666" stroke-width="2"/></svg></button>
    <span>The selection is locked and cannot be moved. Unlock the selection to transform it.</span>
    <svg class="pointer p-status" width="36" height="36"><use href="#arrow"/></svg>
  </footer>
</div>
</main>
<script src="rulers.js"></script>
</body>
</html>
```
FILE: styles.css
```css
* { box-sizing: border-box; }
body { margin: 0; background: #fff; color: #111; font: 14px/20px Inter, "Liberation Sans", sans-serif; }
button, input, select { font: inherit; color: inherit; margin: 0; padding: 0; border: 0; background: none; border-radius: 0; }
button { display: flex; align-items: center; justify-content: center; }
i { font-style: normal; }
svg { display: block; flex: none; overflow: visible; }
.defs { position: absolute; width: 0; height: 0; }
.page { padding: 126px 325px 126px 126px; min-width: 2500px; }
.window { border: 2px solid #777; background: #e4e4e4; position: relative; }

/* Title bar */
.titlebar { display: flex; align-items: center; gap: 71px; height: 44px; padding: 1px 0 0 15px; border-bottom: 2px solid #bdbdbd; background: linear-gradient(#eeeeee, #e2e2e2); }
.apps { display: flex; margin-right: 6px; }
.app { width: 38px; height: 38px; border-radius: 4px; position: relative; }
.app + .app { margin-left: 14px; }
.app:last-child { margin-left: 13px; }
.app + .app::before { content: ""; width: 2px; height: 38px; background: #bbb; position: absolute; left: -8px; }
.app.is-active { background: #c9c9c9; }
.cluster { display: flex; gap: 22px; }
.seg { display: flex; height: 25px; border: 1px solid #c6c6c6; border-radius: 5px; background: #fff; overflow: hidden; }
.seg button { width: 40px; }
.seg button + button { border-left: 1px solid #d6d6d6; }
.seg .slim { width: 17px; }
.seg .is-pressed { background: #c9c9c9; }
.doc-title { width: 254px; height: 25px; border-radius: 4px; background: #c9c9c9; display: flex; align-items: center; justify-content: center; position: relative; margin: 0 -2px; padding-right: 12px; }
.dirty { position: absolute; right: 6px; top: 4px; font-size: 18px; }

/* Context toolbar */
.context { display: flex; align-items: center; height: 35px; padding-left: 13px; border-bottom: 1px solid #b5b5b5; gap: 3px; white-space: nowrap; }
.ctx-name { width: 122px; }
.ctx-btn { height: 24px; background: #fff; border: 1px solid #d0d0d0; border-radius: 2px; width: 38px; gap: 8px; overflow: hidden; }
.ctx-btn.replace { width: 134px; }
.ctx-btn.props { width: 113px; }
.ctx-btn.convert { width: 162px; }
.ctx-btn.is-pressed { background: #c9c9c9; border-color: #b5b5b5; }
.ctx-btn.is-off { background: #e2e2e2; }
.ctx-btn.stroke-w { width: 171px; margin-left: 3px; }
.stroke-line { width: 128px; height: 3px; border-radius: 2px; background: #555; }
.bar { width: 2px; height: 22px; background: #bdbdbd; margin: 0 10px 0 5px; }
.bar.tight { margin: 0 4px; }
.bar.even { margin: 0 5px; }
.ctx-label { width: 24px; }
.ctx-label.wide { width: 49px; margin-left: 6px; }
.ctx-label.corner { width: 53px; margin-left: 4px; }
.check { display: flex; align-items: center; gap: 6px; }
.check.single { width: 118px; margin-left: 4px; }
.check.absolute-sizes { width: 127px; }
input[type="checkbox"] { appearance: none; width: 14px; height: 14px; border-radius: 3px; border: 1px solid #c6c6c6; background: #fff; display: flex; justify-content: center; flex: none; }
input[type="checkbox"]:checked { background: #3b82f7; border-color: #3b82f7; }
input[type="checkbox"]:checked::after { content: ""; width: 5px; height: 9px; border: solid #fff; border-width: 0 2px 2px 0; transform: rotate(40deg); }
.pick { position: relative; display: flex; height: 23px; background: #fff; border: 1px solid #ccc; border-radius: 3px; }
.pick select { appearance: none; width: 100%; padding-left: 5px; }
.pick::after { content: ""; position: absolute; right: 4px; top: 8px; border: solid transparent; border-width: 5px 3px 0; border-top-color: #666; }
.pick.updown::after { top: 12px; right: 6px; border-width: 4px 2px 0; border-top-color: #444; }
.pick.updown::before { content: ""; position: absolute; right: 6px; top: 5px; border: solid transparent; border-width: 0 2px 4px; border-bottom-color: #444; }
.corner-pick { width: 50px; }
.corner-sq { position: absolute; left: 12px; top: 4px; width: 13px; height: 13px; background: #ccc; border: solid #666; border-width: 1px 0 0 1px; }
.percent { width: 61px; margin-left: 1px; color: #aaa; }
.pick.percent::after { border-top-color: #aaa; }
.ctx-seg { display: flex; height: 24px; background: #fff; border: 1px solid #d0d0d0; border-radius: 3px; }
.ctx-seg button { width: 32px; }
.ctx-seg .lone { width: 36px; }
.ctx-seg button + button { border-left: 1px solid #d6d6d6; }

/* Workspace columns */
.workspace { display: flex; align-items: stretch; }
.tools { width: 79px; flex: none; padding: 15px 8px 0 7px; background: #e4e4e4; }
.tool-grid { display: grid; grid-template-columns: 30px 30px; column-gap: 4px; row-gap: 5px; padding-bottom: 8px; margin-bottom: 8px; border-bottom: 2px solid #bbb; }
.tool-grid:nth-of-type(5) { border: 0; margin: 0; }
.tool-grid button { height: 28px; width: 30px; position: relative; border-radius: 3px; }
.tool-grid:nth-of-type(2) button, .tool-grid:nth-of-type(4) button { height: 26px; }
.tool-grid .is-pressed { background: #c9c9c9; border: 1px solid #bbb; }
.tile-t { width: 20px; height: 20px; background: #fff; border: 1px solid #ddd; font: bold 18px/18px "Liberation Serif", serif; color: #444; text-align: center; }
.tile-a { font: 24px/24px "Liberation Serif", serif; color: #333; }
.more { position: absolute; right: 0; bottom: 0; border: solid transparent; border-width: 0 0 6px 6px; border-bottom-color: #666; }
.wheel { width: 20px; height: 20px; border-radius: 50%; background: radial-gradient(#eee 0 3px, transparent 4px), conic-gradient(#f80, #e8e8e8 12%, #2d4, #0cd, #24f 50%, #c0f, #f06, #f33, #fb0); }

.pages { width: 303px; flex: none; background: #ccc; border-right: 1px solid #ddd; }
.tabs { display: flex; height: 24px; background: #bdbdbd; color: #444; align-items: stretch; position: relative; white-space: nowrap; }
.tab.is-active { background: #ececec; color: #111; }
.tab { position: relative; padding-top: 2px; }
.tab.split::before { content: ""; position: absolute; left: 0; top: 6px; width: 1px; height: 12px; background: #888; }
.grip { width: 21px; flex: none; position: relative; }
.grip::before { content: ""; position: absolute; left: 7px; top: 7px; width: 5px; height: 10px; border: solid #777; border-width: 0 1px; }
.tab-menu { position: absolute; right: 3px; top: 6px; }
.pages-tabs .tab { width: 52px; }
.pages-tabs .tab.is-active { width: 48px; }
.pages-tabs .tab:nth-of-type(2) { width: 54px; }
.sec-head { display: flex; align-items: center; gap: 14px; height: 26px; background: #d3d3d3; padding: 0 12px 0 10px; }
.sec-head h2 { margin: 0 auto 0 -9px; font-weight: 400; font-size: 14px; }
.tri { border: solid transparent; border-width: 9px 6px 0; border-top-color: #777; }
.dim { color: #999; }
.book { margin-right: 10px; }
.masters { border-top: 2px solid #eee; height: 348px; }
.master-thumb { width: 168px; height: 118px; background: #fff; margin: 9px auto; }
.thumb-name { margin: 0; text-align: center; font-size: 15px; }
.page-thumb { width: 177px; margin: 3px auto 4px; padding: 4px; background: #999; border-radius: 4px; }

/* Document */
.document { flex: 1; min-width: 0; display: flex; flex-direction: column; }
.doc-tabs { display: flex; height: 25px; border-bottom: 1px solid #b5b5b5; font-size: 11px; }
.doc-tabs button { flex: 1; background: #d0d0d0; border-right: 1px solid #b5b5b5; }
.doc-tabs .is-active { background: #efefef; }
.doc-tabs i { width: 24px; background: #d8d8d8; }
.stage { flex: 1; display: grid; grid-template-columns: 22px 1fr; grid-template-rows: 22px 1fr; background: #f0f0f0; position: relative; }
.unit { font-size: 12px; line-height: 24px; }
.ruler-x { width: 100%; height: 22px; overflow: hidden; }
.ruler-y { width: 22px; height: 100%; overflow: hidden; }
.ruler-x text, .ruler-y text { font: 10px Inter, sans-serif; fill: #222; text-anchor: middle; }
.ruler-x path, .ruler-y path { stroke: #222; }
.canvas { background: #808080; position: relative; }
.artboard { position: absolute; left: 55px; top: 193px; width: 1220px; height: 863px; background: #505050; outline: 1px solid #6a6a6a; }
.frames { display: grid; grid-template-columns: repeat(4, 269px); grid-auto-rows: 215px; gap: 15px 11px; padding: 60px 56px; }
.frame { border: 3px solid #fff; position: relative; }
.frame.is-selected { border-color: #8fb4e8; }
.n { position: absolute; width: 12px; height: 12px; }
.n1, .n4, .n6 { left: -8px; }
.n2, .n7 { left: calc(50% - 7px); }
.n3, .n5, .n8 { right: -8px; }
.n1, .n2, .n3 { top: -8px; }
.n4, .n5 { top: calc(50% - 6px); }
.n6, .n7, .n8 { bottom: -8px; }
.badge { position: absolute; width: 58px; height: 58px; border-radius: 50%; background: #ff9900; color: #fff; font: 300 43px/58px Inter, sans-serif; font-feature-settings: "cv09"; text-align: center; z-index: 2; }
.b-one { left: 159px; top: 140px; }
.b-two { left: 434px; top: 39px; }
.b-three { left: 159px; top: 771px; }
.b-four { left: 434px; top: 771px; }
.b-tab { left: 393px; top: -33px; }
.pointer { position: absolute; z-index: 2; }
.p-frame { left: 194px; top: 13px; transform: rotate(180deg); }
.p-layer { left: 201px; top: 36px; }
.p-status { left: 352px; top: 29px; transform: rotate(-5deg); }

/* Layers and transform */
.side { width: 301px; flex: none; background: #efefef; position: relative; }
.side-tabs .tab { width: 52px; }
.side-tabs .tab:nth-of-type(4), .side-tabs .tab:nth-of-type(3) { width: 51px; }
.blend { display: flex; align-items: center; height: 36px; padding: 1px 7px 0 6px; border-bottom: 2px solid #c6c6c6; }
.blend label { width: 63px; }
.blend .pick { height: 24px; }
.opacity { width: 55px; margin-right: 3px; }
.opacity select { padding-left: 2px; }
.mode { width: 124px; margin-right: 5px; }
.blend-lock { margin-left: auto; width: 22px; height: 24px; background: #e6e6e6; }
.layers { list-style: none; margin: 0; padding: 0; height: 949px; border-right: 17px solid #e6e6e6; }
.layers li { display: flex; align-items: center; height: 57px; border-bottom: 2px solid #d2d2d2; padding: 0 9px 0 26px; position: relative; }
.layers li.is-selected { background: #a0a8b5; border-color: #a0a8b5; }
.th { width: 53px; height: 53px; flex: none; background: #cbcbcb; border: 1px solid #aaa; margin-right: 6px; display: flex; align-items: center; justify-content: center; }
.th.fr::before { content: ""; width: 51px; height: 42px; border: 1px solid #e4e4e4; }
.th.dark { background: #505050; box-shadow: inset 0 8px #c6c6c6, inset 0 -9px #c6c6c6; }
.is-selected .th { background: #868f9d; border-color: #7c8593; }
.nm { margin-right: auto; }
.nm b { font-weight: 700; }
.lk { width: 11px; height: 15px; margin-right: 10px; }
.layers li.master { background: linear-gradient(#bbb, #666) left / 3px 100% no-repeat; }
.layers li.child { padding-left: 38px; }
.layers li.child::before { content: ""; position: absolute; top: -4px; left: 80px; right: 1px; height: 2px; background: linear-gradient(90deg, transparent, #5b97d8 40%); }
.open { position: absolute; left: 5px; width: 17px; height: 17px; border-radius: 50%; background: #fff; display: flex; align-items: center; justify-content: center; }
.open::before { content: ""; border: solid transparent; border-width: 7px 4px 0; border-top-color: #333; }
.layer-actions { display: flex; align-items: center; height: 28px; border-top: 1px solid #c6c6c6; border-bottom: 1px solid #c6c6c6; padding: 0 9px 0 6px; }
.layer-actions button { height: 22px; margin-right: 9px; }
.layer-actions .is-soft { width: 23px; background: #e2e2e2; }
.layer-actions .first { margin-left: 56px; }
.layer-actions .fx { font: italic 18px/20px "Liberation Serif", serif; color: #222; }
.layer-actions .last { margin: 0 13px 0 auto; }
.layer-actions .bin { margin-right: 0; color: #555; }
.transform-tabs .tab.is-active { width: 74px; }
.transform-tabs .tab { width: 72px; }
.transform-tabs .tab.split { width: 61px; }
.transform { display: flex; margin: 0; padding: 12px 17px 16px 20px; }
.anchor { margin: 12px 0 0; }
.fields { display: grid; grid-template-columns: 35px 68px 28px 69px; row-gap: 3px; }
.fields label { text-align: right; padding: 5px 5px 0 0; line-height: 16px; }
.fields input, .fields .pick { height: 22px; width: 100%; background: #fff; border: 1px solid #ccc; border-radius: 3px; padding-left: 2px; color: #aaa; }
.fields .pick select { padding-left: 1px; }
.fields .pick::after { border-top-color: #999; }
.fields .gap { margin-top: 13px; }
.chain { margin: 15px 0 0 11px; }
.o-four { left: 318px; top: 62px; }
.o-one { left: 318px; top: 745px; }
.o-three { left: 318px; top: 917px; }

/* Status bar */
.status { display: flex; align-items: center; height: 24px; background: #e4e4e4; position: relative; padding-left: 6px; white-space: nowrap; }
.status button { width: 22px; height: 22px; }
.page-no { width: 114px; height: 21px; background: #fff; text-align: center; margin: 2px 0 0; }
.status .bell { margin: 0 12px 0 8px; }
```
FILE: rulers.js
```js
const NS = "http://www.w3.org/2000/svg";
const PX_PER_MM = 2.907;

function add(parent, name, attrs, text) {
  const el = document.createElementNS(NS, name);
  for (const key in attrs) el.setAttribute(key, attrs[key]);
  if (text !== undefined) el.textContent = text;
  parent.appendChild(el);
}

// Ticks every 2 mm, a label every 20 mm.
function drawRuler(svg, origin, from, to, vertical, cursor) {
  let d = "";
  for (let mm = from; mm <= to; mm += 2) {
    const p = Math.round(origin + mm * PX_PER_MM) + 0.5;
    const len = mm % 20 === 0 ? 9 : mm % 4 === 0 ? 5 : 3;
    d += vertical ? `M${22 - len} ${p}H22` : `M${p} ${22 - len}V22`;
    if (mm % 20 === 0) {
      if (vertical) add(svg, "text", { transform: `translate(11 ${p}) rotate(-90)` }, mm);
      else add(svg, "text", { x: p, y: 11 }, mm);
    }
  }
  d += vertical ? `M0 ${cursor}H22` : `M${cursor} 0V22`;
  add(svg, "path", { d });
}

drawRuler(document.getElementById("ruler-x"), 54, -18, 440, false, 234.5);
drawRuler(document.getElementById("ruler-y"), 192, -66, 320, true, 429.5);

// Page preview: the spread with its twelve picture frames.
const preview = document.getElementById("page-preview");
add(preview, "rect", { width: 169, height: 120, fill: "#505050" });
add(preview, "path", { d: "M0 0L169 120M169 0L0 120M.5.5H168.500V119.500H.5Z", stroke: "#333", fill: "none" });
for (let r = 0; r < 3; r++) {
  for (let c = 0; c < 4; c++) {
    const x = 8 + c * 39, y = 8 + r * 32;
    add(preview, "rect", { x, y, width: 36, height: 29, fill: "none", stroke: "#777", "stroke-width": 1.5 });
    add(preview, "path", { d: `M${x} ${y}l36 29M${x + 36} ${y}l-36 29`, stroke: "#383838" });
  }
}
```
